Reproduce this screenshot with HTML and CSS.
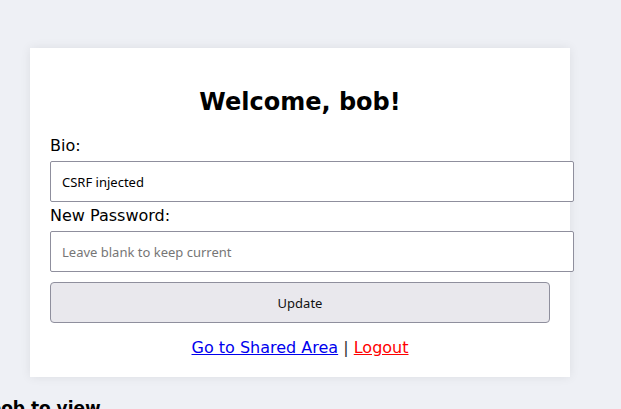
FILE: index.html
```html
<!DOCTYPE html>
<html>
<head>
<meta charset="utf-8">
<link rel="stylesheet" href="styles.css">
</head>
<body>
<div class="page">
  <div class="card">
    <h2 class="title">Welcome, bob!</h2>
    <form class="form">
      <label class="label">Bio:</label>
      <input class="field" type="text" value="CSRF injected">
      <label class="label">New Password:</label>
      <input class="field" type="password" placeholder="Leave blank to keep current">
      <button class="btn" type="button">Update</button>
    </form>
    <p class="links"><a href="#" class="link">Go to Shared Area</a> | <a href="#" class="link logout">Logout</a></p>
  </div>
  <h3 class="note">Log in as bob to view</h3>
</div>
</body>
</html>
```
FILE: styles.css
```css
html, body {
  margin: 0;
  padding: 0;
}
body {
  background: #eef0f5;
  font-family: "DejaVu Sans", sans-serif;
  font-size: 16px;
  color: #000;
  overflow: hidden;
}
.page {
  padding: 48px 0 0 30px;
}
.card {
  width: 500px;
  background: #fff;
  padding: 20px 20px 20px;
  box-shadow: 0 0 10px rgba(0, 0, 0, 0.08);
}
.title {
  font-size: 24px;
  text-align: center;
  margin: 20px 0 20px;
  line-height: 28px;
}
.form {
  display: flex;
  flex-direction: column;
  align-items: flex-start;
}
.label {
  display: block;
  line-height: 19px;
  margin-bottom: 6px;
}
.field {
  width: 500px;
  box-sizing: content-box;
  height: 39px;
  padding: 0 11px;
  border: 1px solid #8f8f9d;
  border-radius: 2px;
  font-family: "Noto Sans", sans-serif;
  font-size: 13px;
  color: #000;
  margin: 0 0 4px;
  outline: none;
}
.field::placeholder {
  color: #767676;
}
.btn {
  width: 500px;
  height: 41px;
  margin-top: 6px;
  background: #e9e8ed;
  border: 1px solid #8f8f9d;
  border-radius: 4px;
  font-family: "Noto Sans", sans-serif;
  font-size: 13px;
  color: #111;
}
.links {
  text-align: center;
  margin: 15px 0 0;
  line-height: 19px;
  color: #333;
}
.link {
  color: #0000ee;
}
.logout {
  color: #ff0000;
}
.note {
  font-size: 17px;
  margin: 21px 0 0 -133px;
  white-space: nowrap;
}
```
